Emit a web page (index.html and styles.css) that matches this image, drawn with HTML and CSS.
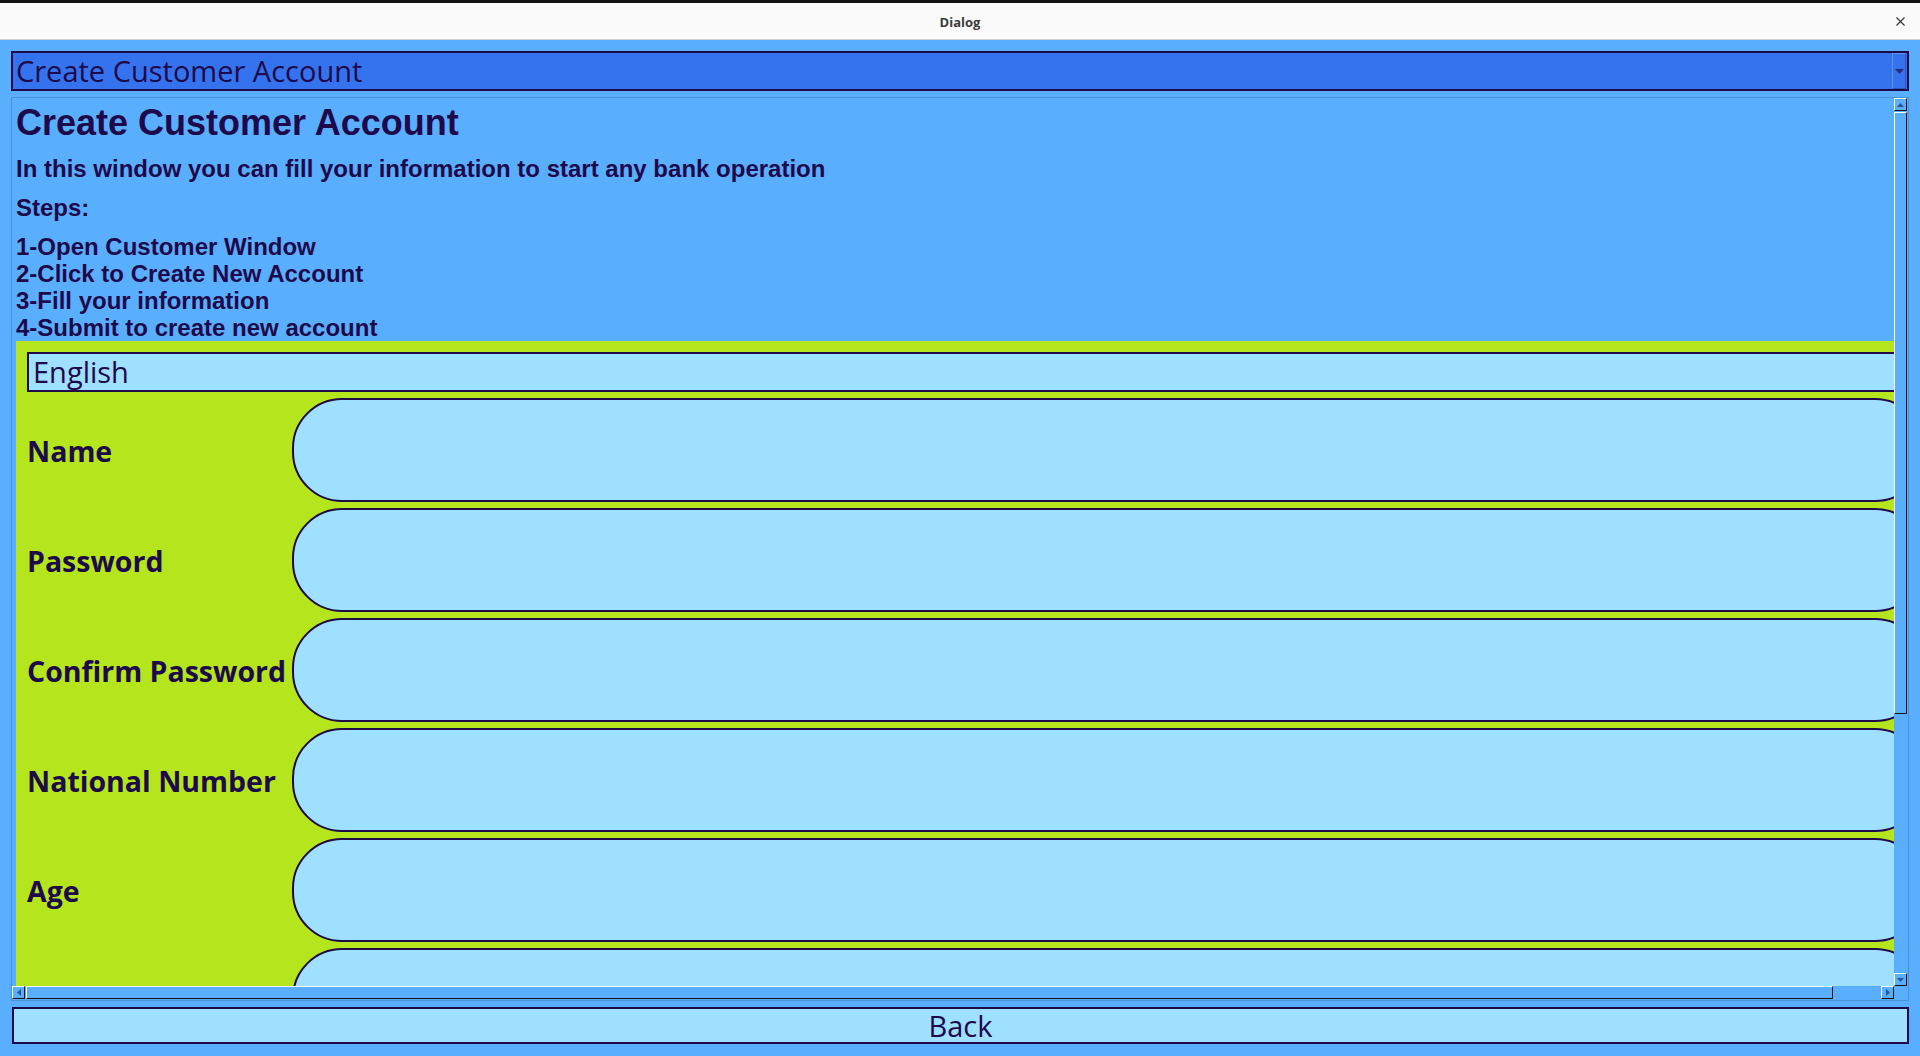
FILE: index.html
```html
<!DOCTYPE html>
<html lang="en">
<head>
<meta charset="utf-8">
<title>Dialog</title>
<link rel="stylesheet" href="styles.css">
</head>
<body>
<div class="window">
  <div class="titlebar">
    <span class="title">Dialog</span>
    <span class="close"><svg width="9" height="9" viewBox="0 0 9 9"><path d="M0.5 0.5L8.5 8.5M8.5 0.5L0.5 8.5" stroke="#333" stroke-width="1.1" fill="none"/></svg></span>
  </div>
  <div class="main">
    <div class="combo">
      <span class="combo-text">Create Customer Account</span>
      <span class="drop"><svg width="9" height="5" viewBox="0 0 9 5"><path d="M0 0H9L4.5 5Z" fill="#2b2c78"/></svg></span>
    </div>
    <div class="scrollarea">
      <div class="viewport">
        <div class="content">
          <h1 class="heading">Create Customer Account</h1>
          <p class="info">In this window you can fill your information to start any bank operation</p>
          <p class="info">Steps:</p>
          <p class="info steps">1-Open Customer Window<br>2-Click to Create New Account<br>3-Fill your information<br>4-Submit to create new account</p>
          <div class="form">
            <div class="lang">English</div>
            <div class="row"><span class="label">Name</span><div class="field"></div></div>
            <div class="row"><span class="label">Password</span><div class="field"></div></div>
            <div class="row"><span class="label">Confirm Password</span><div class="field"></div></div>
            <div class="row"><span class="label">National Number</span><div class="field"></div></div>
            <div class="row"><span class="label">Age</span><div class="field"></div></div>
            <div class="row"><span class="label"></span><div class="field"></div></div>
          </div>
        </div>
      </div>
      <div class="vbar">
        <div class="sbtn"><svg width="7" height="4" viewBox="0 0 7 4"><path d="M0 4H7L3.5 0Z" fill="#2c5592"/></svg></div>
        <div class="vhandle"></div>
        <div class="vtrack"></div>
        <div class="sbtn"><svg width="7" height="4" viewBox="0 0 7 4"><path d="M0 0H7L3.5 4Z" fill="#2c5592"/></svg></div>
      </div>
      <div class="hbar">
        <div class="sbtn"><svg width="4" height="7" viewBox="0 0 4 7"><path d="M4 0V7L0 3.5Z" fill="#2c5592"/></svg></div>
        <div class="hhandle"></div>
        <div class="htrack"></div>
        <div class="sbtn"><svg width="4" height="7" viewBox="0 0 4 7"><path d="M0 0V7L4 3.5Z" fill="#2c5592"/></svg></div>
      </div>
      <div class="corner"></div>
    </div>
    <button class="back">Back</button>
  </div>
</div>
</body>
</html>
```

FILE: styles.css
```css
html, body {
  margin: 0;
  padding: 0;
  width: 1920px;
  height: 1056px;
  overflow: hidden;
  background: #5aaefe;
}

.window {
  display: flex;
  flex-direction: column;
  height: 1056px;
}

.titlebar {
  flex: none;
  height: 36px;
  border-top: 3px solid #121212;
  border-bottom: 1px solid #cfd3d8;
  background: #fafafa;
  position: relative;
  display: flex;
  align-items: center;
  justify-content: center;
}

.title {
  font-family: "Open Sans", "DejaVu Sans", sans-serif;
  font-weight: 700;
  font-size: 13px;
  color: #3a3a3a;
  margin-top: 1px;
}

.close {
  position: absolute;
  right: 15px;
  top: 14px;
  display: flex;
}

.main {
  flex: 1;
  display: flex;
  flex-direction: column;
  padding: 11px 11px 12px 11px;
  gap: 6px;
  background: #5aaefe;
  min-height: 0;
}

.combo {
  flex: none;
  height: 36px;
  border: 2px solid #1e0a4a;
  background: #3572ee;
  display: flex;
  align-items: center;
  justify-content: space-between;
}

.combo-text {
  font-family: "Open Sans", sans-serif;
  font-size: 29px;
  color: #1e0a4a;
  padding-left: 3px;
  line-height: 36px;
}

.drop {
  width: 12px;
  height: 34px;
  border-left: 1px solid #5f92f6;
  border-top: 1px solid #5f92f6;
  border-right: 1px solid #2857b8;
  border-bottom: 1px solid #2857b8;
  margin-right: 1px;
  display: flex;
  align-items: center;
  justify-content: center;
}

.scrollarea {
  flex: none;
  height: 902px;
  border: 1px solid #4a90d8;
  display: grid;
  grid-template-columns: 1882px 14px;
  grid-template-rows: 888px 14px;
}

.viewport {
  overflow: hidden;
  position: relative;
}

.content {
  width: 1924px;
  padding-left: 4px;
  color: #1e0a4a;
}

.heading {
  margin: 3px 0 10px 0;
  font-family: "Liberation Sans", Arial, sans-serif;
  font-weight: 700;
  font-size: 36px;
  line-height: 44px;
}

.info {
  margin: 0 0 11px 0;
  font-family: "Liberation Sans", Arial, sans-serif;
  font-weight: 700;
  font-size: 24px;
  line-height: 28px;
}

.steps {
  line-height: 27px;
  margin-top: 10.5px;
  margin-bottom: 0;
}

.form {
  width: 1898px;
  background: #b5e61d;
  padding: 11px 11px 20px 11px;
  display: flex;
  flex-direction: column;
  gap: 6px;
}

.lang {
  height: 36px;
  border: 2px solid #1e0a4a;
  background: #9fdfff;
  font-family: "Open Sans", sans-serif;
  font-size: 29px;
  line-height: 36px;
  padding-left: 4px;
  color: #1e0a4a;
}

.row {
  display: flex;
  align-items: center;
  height: 104px;
}

.label {
  flex: none;
  width: 265px;
  padding-top: 2px;
  font-family: "Open Sans", sans-serif;
  font-weight: 700;
  font-size: 28.5px;
  color: #1e0a4a;
  white-space: nowrap;
}

.field {
  flex: 1;
  height: 100px;
  border: 2px solid #1e0a4a;
  border-radius: 50px;
  background: #9fdfff;
}

.vbar {
  display: flex;
  flex-direction: column;
  background: #5aaefe;
}

.hbar {
  display: flex;
  flex-direction: row;
  background: #5aaefe;
}

.sbtn {
  flex: none;
  width: 11px;
  height: 11px;
  border-left: 1px solid #ffffff;
  border-top: 1px solid #ffffff;
  border-right: 1px solid #111111;
  border-bottom: 1px solid #111111;
  background: #5aaefe;
  display: flex;
  align-items: center;
  justify-content: center;
}

.vhandle {
  flex: none;
  width: 11px;
  height: 600px;
  margin-top: 1px;
  border-left: 1px solid #ffffff;
  border-top: 1px solid #ffffff;
  border-right: 1px solid #111111;
  border-bottom: 1px solid #111111;
  background: #5aaefe;
}

.vtrack {
  flex: 1;
}

.hhandle {
  flex: none;
  height: 11px;
  width: 1805px;
  margin-left: 1px;
  border-left: 1px solid #ffffff;
  border-top: 1px solid #ffffff;
  border-right: 1px solid #111111;
  border-bottom: 1px solid #111111;
  background: #5aaefe;
}

.htrack {
  flex: 1;
}

.corner {
  background: #5aaefe;
}

.back {
  flex: none;
  height: 37px;
  margin: 0 0 0 1px;
  border: 2px solid #1e0a4a;
  background: #9fdfff;
  font-family: "Open Sans", sans-serif;
  font-size: 29px;
  color: #1e0a4a;
  padding: 0;
  line-height: 31px;
}
```
